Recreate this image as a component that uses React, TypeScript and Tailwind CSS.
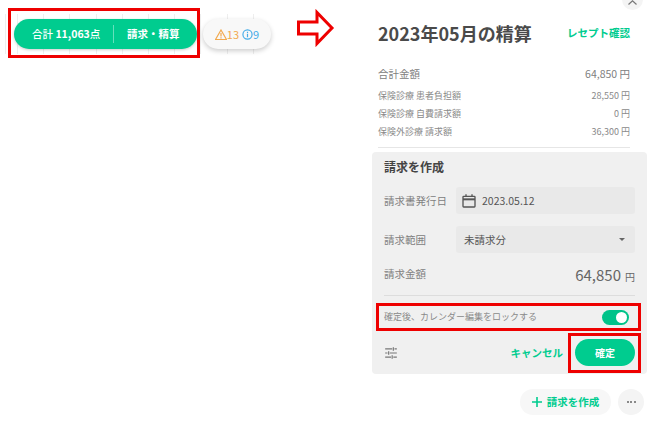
import React from "react";

const font = { fontFamily: '"Noto Sans CJK JP", "Noto Sans", sans-serif' };

function Row({ label, value }: { label: string; value: string }) {
  return (
    <div className="flex h-[18px] items-center justify-between pt-[1px] text-[9px] text-[#8a8a8a]">
      <span>{label}</span>
      <span>{value}</span>
    </div>
  );
}

export default function App() {
  return (
    <div className="relative flex h-[421px] w-[657px] overflow-hidden bg-white" style={font}>
      {/* left strip */}
      <div className="relative flex h-[421px] w-[372px] shrink-0 items-start">
        <div className="mt-[14px] flex h-[40px] w-[274px] items-center gap-[6px] bg-[repeating-linear-gradient(90deg,#eeeeee_0px,#eeeeee_1px,#ffffff_1px,#ffffff_26.2px)] bg-[position:17px_0] pl-[14px]">
          <div className="flex h-[30px] w-[183px] items-center rounded-full bg-[#00cc8f] text-[10.5px] font-bold text-white shadow-[0_1px_3px_rgba(0,0,0,0.2)]">
            <span className="w-[99px] pl-[18px] whitespace-nowrap"><span className="font-medium">合計</span> 11,063<span className="font-medium">点</span></span>
            <span className="h-[18px] w-px bg-white/40" />
            <span className="pl-[13px] whitespace-nowrap">請求・精算</span>
          </div>
          <div className="flex h-[30px] w-[68px] items-center justify-center gap-[3px] rounded-full bg-[#f8f8f8] text-[11px] shadow-[0_2px_5px_rgba(0,0,0,0.2)]">
            <span className="flex items-center text-[#f2a94e]">
              <svg width="12" height="11" viewBox="0 0 24 22" fill="none" stroke="#f2a94e" strokeWidth="2.4">
                <path d="M12 2 L23 21 H1 Z" />
                <path d="M12 8 V15 M12 16.5 V19" />
              </svg>
              13
            </span>
            <span className="flex items-center text-[#45ace8]">
              <svg width="11" height="11" viewBox="0 0 24 24" fill="none" stroke="#45ace8" strokeWidth="2.6">
                <circle cx="12" cy="12" r="10" />
                <path d="M12 10.5 V18 M12 6 V8.5" />
              </svg>
              9
            </span>
          </div>
        </div>
        <svg className="absolute left-[296px] top-[9px]" width="39" height="38" viewBox="0 0 39 38" fill="#fff" stroke="#ee0000" strokeWidth="3">
          <path d="M2.5 13 H21 V3.5 L36 19 L21 34.5 V25 H2.5 Z" />
        </svg>
      </div>

      {/* right column */}
      <div className="flex w-[275px] shrink-0 flex-col">
        <div className="flex h-[152px] flex-col pl-[6px] pr-[17px]">
          <div className="mt-[19px] flex h-[28px] items-center justify-between">
            <span className="text-[18px] leading-none font-bold text-[#4a4a4a] whitespace-nowrap">2023年05月の精算</span>
            <span className="text-[10.5px] font-bold text-[#00cc8f] whitespace-nowrap">レセプト確認</span>
          </div>
          <div className="mt-[18px] flex h-[18px] items-center justify-between text-[10.5px] text-[#808080]">
            <span>合計金額</span>
            <span>64,850 円</span>
          </div>
          <div className="mt-[3px]">
            <Row label="保険診療 患者負担額" value="28,550 円" />
            <Row label="保険診療 自費請求額" value="0 円" />
            <Row label="保険外診療 請求額" value="36,300 円" />
          </div>
          <div className="mt-[7px] h-px bg-[#e6e6e6]" />
        </div>

        <div className="flex h-[222px] flex-col rounded-[4px] bg-[#f0f0f0] px-[12px]">
          <div className="mt-[7px] flex h-[16px] items-center text-[12px] font-bold text-[#444444]">請求を作成</div>
          <div className="mt-[12px] flex h-[27px] items-center">
            <span className="w-[72px] text-[10.5px] text-[#808080]">請求書発行日</span>
            <div className="flex h-[27px] w-[179px] items-center rounded-[3px] bg-[#e9e9e9] pl-[5px] text-[10.5px] text-[#555555]">
              <svg width="16" height="16" viewBox="0 0 24 24" fill="none" stroke="#555555" strokeWidth="2">
                <rect x="3" y="5" width="18" height="16" rx="1" />
                <path d="M3 9.5 H21" strokeWidth="3" />
                <path d="M7.5 2 V5 M16.5 2 V5" />
              </svg>
              <span className="ml-[5px]">2023.05.12</span>
            </div>
          </div>
          <div className="mt-[12px] flex h-[27px] items-center">
            <span className="w-[72px] text-[10.5px] text-[#808080]">請求範囲</span>
            <div className="flex h-[27px] w-[179px] items-center justify-between rounded-[3px] bg-[#e9e9e9] pl-[8px] pr-[10px] text-[10.5px] text-[#555555]">
              <span>未請求分</span>
              <span className="h-0 w-0 border-x-[3px] border-t-[3px] border-x-transparent border-t-[#666666]" />
            </div>
          </div>
          <div className="mt-[10px] flex h-[22px] items-center justify-between">
            <span className="text-[10.5px] text-[#808080]">請求金額</span>
            <span className="text-[#666666]">
              <span className="text-[15px]">64,850</span>
              <span className="ml-[4px] text-[10px]">円</span>
            </span>
          </div>
          <div className="mt-[10px] h-px bg-[#dddddd]" />
          <div className="mt-[11px] flex h-[20px] items-center justify-between pr-[6px]">
            <span className="text-[9px] text-[#8a8a8a]">確定後、カレンダー編集をロックする</span>
            <div className="flex h-[15px] w-[27px] items-center justify-end rounded-full bg-[#00c389] pr-[2px]">
              <span className="h-[11px] w-[11px] rounded-full bg-white" />
            </div>
          </div>
          <div className="mt-[12px] flex h-[27px] items-center">
            <svg width="14" height="14" viewBox="0 0 24 24" fill="none" stroke="#777777" strokeWidth="2">
              <path d="M2 5 H14 M18 5 H22 M16 2 V8 M2 12 H6 M10 12 H22 M8 9 V15 M2 19 H12 M16 19 H22 M14 16 V22" />
            </svg>
            <span className="ml-auto text-[10.5px] font-bold text-[#00cc8f]">キャンセル</span>
            <button className="ml-[12px] h-[27px] w-[60px] rounded-full bg-[#00cc8f] text-[10px] font-bold text-white">確定</button>
          </div>
        </div>

        <div className="mt-[15px] flex items-center justify-end gap-[7px] pr-[3px]">
          <div className="flex h-[26px] w-[91px] items-center justify-center gap-[5px] rounded-full bg-[#f7f7f7] text-[10.5px] font-bold text-[#00cc8f]">
            <svg width="10" height="10" viewBox="0 0 10 10" stroke="#00cc8f" strokeWidth="1.6"><path d="M5 0 V10 M0 5 H10" /></svg>
            請求を作成
          </div>
          <div className="flex h-[26px] w-[26px] items-center justify-center gap-[1.5px] rounded-full bg-[#f4f4f4]">
            <span className="h-[2px] w-[2px] rounded-full bg-[#666666]" />
            <span className="h-[2px] w-[2px] rounded-full bg-[#666666]" />
            <span className="h-[2px] w-[2px] rounded-full bg-[#666666]" />
          </div>
        </div>
      </div>

      {/* chevron peeking at top */}
      <div className="absolute left-[622px] top-[-11px] flex h-[21px] w-[21px] items-end justify-center rounded-full bg-[#f4f4f4] pb-[5px]">
        <svg width="9" height="5" viewBox="0 0 9 5" fill="none" stroke="#777777" strokeWidth="1.2"><path d="M0.5 4.5 L4.5 0.8 L8.5 4.5" /></svg>
      </div>

      {/* red annotation frames */}
      <div className="absolute left-[8px] top-[8px] h-[50px] w-[192px] border-[3px] border-[#ee0000]" />
      <div className="absolute left-[376px] top-[303px] h-[28px] w-[265px] border-[3px] border-[#ee0000]" />
      <div className="absolute left-[568px] top-[333px] h-[40px] w-[73px] border-[3px] border-[#ee0000]" />
    </div>
  );
}
